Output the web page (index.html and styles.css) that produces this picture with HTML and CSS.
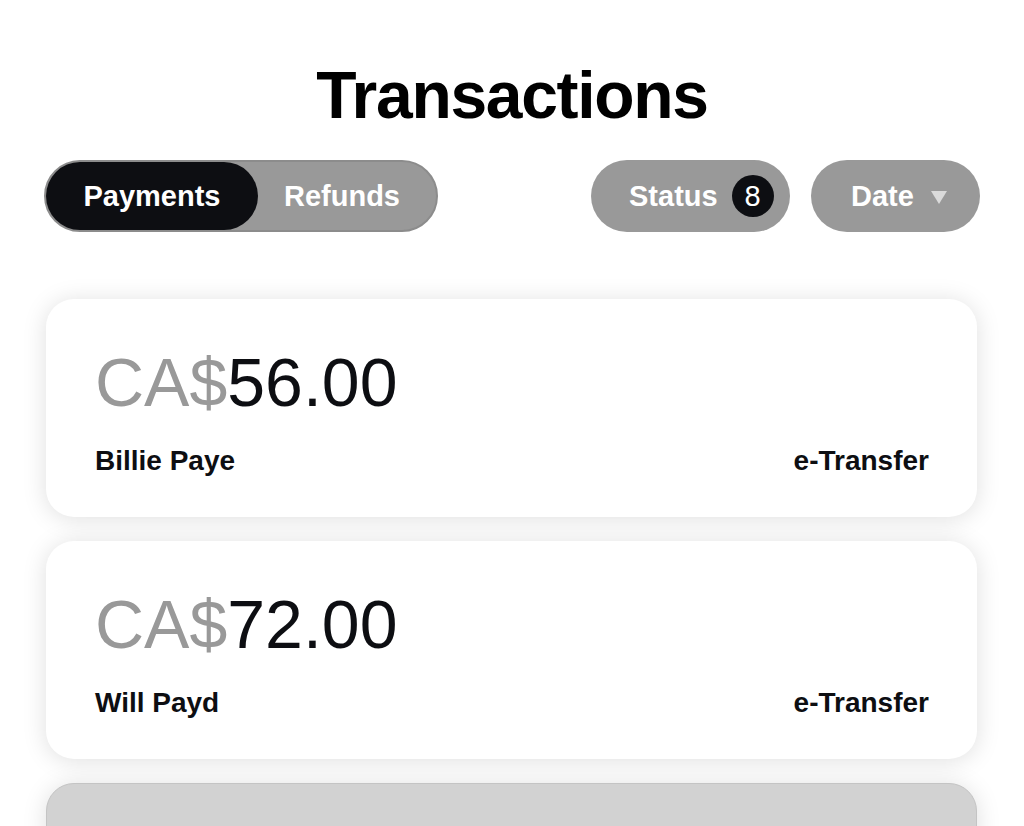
FILE: index.html
```html
<!DOCTYPE html>
<html lang="en">
<head>
<meta charset="utf-8">
<title>Transactions</title>
<link rel="stylesheet" href="styles.css">
</head>
<body>
<h1 class="title">Transactions</h1>
<div class="toolbar">
  <div class="segmented">
    <span class="seg seg-active">Payments</span>
    <span class="seg seg-idle">Refunds</span>
  </div>
  <div class="filters">
    <button class="pill pill-status">Status <span class="badge">8</span></button>
    <button class="pill pill-date">Date <span class="caret"></span></button>
  </div>
</div>
<div class="list">
  <div class="card">
    <div class="amount"><span class="cur">CA$</span>56.00</div>
    <div class="meta"><span>Billie Paye</span><span>e-Transfer</span></div>
  </div>
  <div class="card">
    <div class="amount"><span class="cur">CA$</span>72.00</div>
    <div class="meta"><span>Will Payd</span><span>e-Transfer</span></div>
  </div>
  <div class="card card-loading"></div>
</div>
</body>
</html>
```

FILE: styles.css
```css
* { box-sizing: border-box; }
html, body { margin: 0; padding: 0; background: #ffffff; }
body {
  font-family: "Liberation Sans", Arial, sans-serif;
  color: #0d0e12;
  width: 1024px;
  height: 826px;
  overflow: hidden;
}
.title {
  margin: 0;
  padding-top: 60px;
  height: 130px;
  font-size: 66px;
  line-height: 70px;
  letter-spacing: -1.3px;
  font-weight: 700;
  text-align: center;
  color: #000;
}
.toolbar {
  margin-top: 30px;
  padding: 0 44px;
  display: flex;
  justify-content: space-between;
  align-items: center;
}
.segmented {
  display: flex;
  align-items: center;
  height: 72px;
  width: 394px;
  background: #999999;
  border: 2px solid #8c8c8c;
  border-radius: 36px;
}
.seg {
  font-size: 29px;
  font-weight: 700;
  color: #fff;
  height: 68px;
  display: flex;
  align-items: center;
}
.seg-active {
  background: #0d0e12;
  border-radius: 34px;
  width: 212px;
  justify-content: center;
}
.seg-idle {
  padding-left: 26px;
}
.filters {
  display: flex;
  gap: 21px;
}
.pill {
  height: 72px;
  border: none;
  border-radius: 36px;
  background: #999999;
  color: #fff;
  font-family: inherit;
  font-size: 29px;
  font-weight: 700;
  display: flex;
  align-items: center;
  margin: 0;
}
.pill-status {
  width: 199px;
  padding: 0 0 0 38px;
  gap: 14px;
}
.badge {
  width: 42px;
  height: 42px;
  border-radius: 50%;
  background: #0d0e12;
  color: #fff;
  font-weight: 400;
  font-size: 29px;
  display: flex;
  align-items: center;
  justify-content: center;
}
.pill-date {
  width: 169px;
  padding: 0 0 0 40px;
  gap: 17px;
}
.caret {
  width: 0;
  height: 0;
  border-left: 8px solid transparent;
  border-right: 8px solid transparent;
  border-top: 13px solid #dadada;
  margin-top: 2px;
}
.list {
  margin-top: 67px;
  padding: 0 47px 0 46px;
  display: flex;
  flex-direction: column;
  gap: 24px;
}
.card {
  background: #fff;
  border-radius: 28px;
  box-shadow: 0 2px 24px rgba(0, 0, 0, 0.13);
  padding: 49px 48px 42px 49px;
  height: 218px;
}
.amount {
  font-size: 68px;
  line-height: 68px;
  font-weight: 400;
  color: #0d0e12;
}
.cur { color: #999999; }
.meta {
  margin-top: 31px;
  display: flex;
  justify-content: space-between;
  font-size: 28px;
  line-height: 28px;
  font-weight: 700;
  color: #0d0e12;
}
.card-loading {
  background: #d2d2d2;
  border: 1px solid #c4c4c4;
  height: 120px;
}
```
